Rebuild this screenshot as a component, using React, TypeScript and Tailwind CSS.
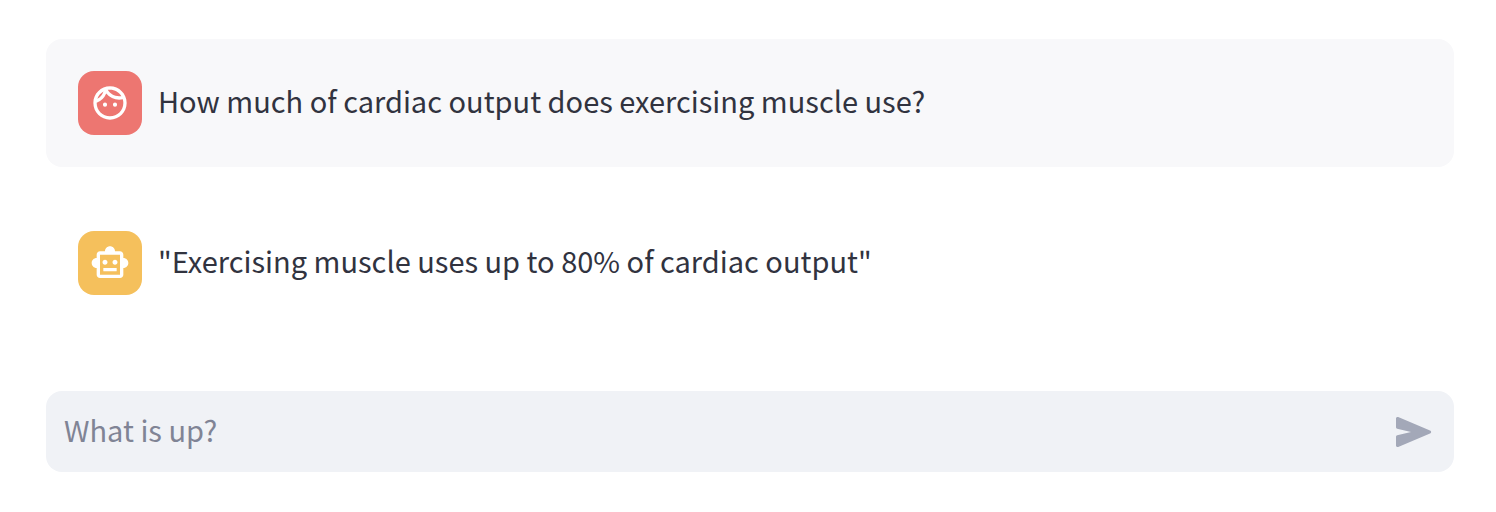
import React from "react";
import { MdOutlineFace, MdOutlineSmartToy } from "react-icons/md";

type Role = "user" | "assistant";

interface Message {
  role: Role;
  text: string;
}

const messages: Message[] = [
  { role: "user", text: "How much of cardiac output does exercising muscle use?" },
  { role: "assistant", text: "\"Exercising muscle uses up to 80% of cardiac output\"" },
];

function ChatMessage({ role, text }: Message) {
  const isUser = role === "user";
  return (
    <li className={`flex items-center gap-4 rounded-2xl p-8 ${isUser ? "bg-[#f8f8fa]" : "bg-transparent"}`}>
      <span
        className={`flex size-16 shrink-0 items-center justify-center rounded-2xl text-white ${
          isUser ? "bg-[#ed7671]" : "bg-[#f5c05c]"
        }`}
      >
        {isUser ? <MdOutlineFace className="size-10" /> : <MdOutlineSmartToy className="size-10" />}
      </span>
      <p className="pb-1.5 text-[29px] leading-12">{text}</p>
    </li>
  );
}

export default function App() {
  return (
    <main className="bg-white pt-[39px] pr-[42px] pb-10 pl-[46px] font-['Noto_Sans_CJK_SC',sans-serif] text-[#31333f]">
      <ul className="flex flex-col gap-8">
        {messages.map((m) => (
          <ChatMessage key={m.role} {...m} />
        ))}
      </ul>
      <form className="mt-16 flex items-center rounded-2xl bg-[#f0f2f6] py-4 pr-5 pl-[18px]" onSubmit={(e) => e.preventDefault()}>
        <input
          type="text"
          aria-label="Message"
          placeholder="What is up?"
          className="h-[49px] min-w-0 flex-1 bg-transparent pb-1.5 text-[29px] outline-none placeholder:text-[#808495]"
        />
        <button type="submit" aria-label="Send" className="text-[#a3a8b8]">
          <svg viewBox="0 0 40 40" className="size-10" fill="currentColor" aria-hidden="true">
            <path d="M2 33.500v-8.800a1.500 1.500 0 0 1 1.200-1.500L17 20 3.200 16.800A1.500 1.500 0 0 1 2 15.300V6.500a1.500 1.500 0 0 1 2.200-1.400l31.800 13.300a1.700 1.700 0 0 1 0 3.200L4.200 34.900A1.500 1.500 0 0 1 2 33.500Z" />
          </svg>
        </button>
      </form>
    </main>
  );
}
